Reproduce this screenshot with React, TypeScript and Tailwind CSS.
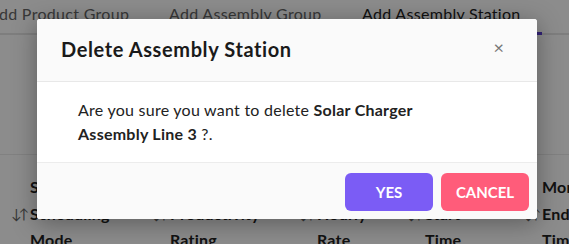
import React from "react";

const font = { fontFamily: "Lato, 'Noto Sans', sans-serif" };

function SortIcon() {
  return (
    <span className="w-[19px] shrink-0 text-[#666] text-[14px] leading-none tracking-[-3px]">
      ↓↑
    </span>
  );
}

const columns = [
  { left: "w-[140px]", lines: ["Station", "Scheduling", "Mode"] },
  { left: "w-[147px]", lines: ["Station", "Productivity", "Rating"] },
  { left: "w-[108px]", lines: ["Station", "Hourly", "Rate"] },
  { left: "w-[117px]", lines: ["Monday", "Start", "Time"] },
  { left: "w-[120px]", lines: ["Monday", "End", "Time"] },
];

export default function App() {
  return (
    <div className="relative w-[569px] h-[244px] overflow-hidden bg-white" style={font}>
      {/* Background page */}
      <div className="flex flex-col">
        <div className="flex items-end h-[35px] border-b-2 border-[#e6e6e6] ml-[-12px]">
          <div className="w-[181px] text-[16px] tracking-[0.3px] text-[#666] pb-[7px]">Add Product Group</div>
          <div className="w-[193px] text-[16px] tracking-[0.3px] text-[#666] pb-[7px]">Add Assembly Group</div>
          <div className="relative w-[190px] text-[16px] tracking-[0.3px] text-[#222] pb-[7px]">
            Add Assembly Station
            <div className="absolute left-[-20px] w-[200px] bottom-[-2px] h-[3px] bg-[#5b3fd6]" />
          </div>
        </div>
        <div className="h-[120px] border-b border-[#ececec]" />
        <div className="flex pl-[11px] pt-[19px]">
          {columns.map((c, i) => (
            <div key={i} className={`${c.left} shrink-0 flex`}>
              <div className="flex flex-col pt-[33px]">
                <SortIcon />
              </div>
              <div className="flex flex-col text-[16px] font-bold text-[#222] leading-[26.5px] tracking-[0.2px]">
                {c.lines.map((l, j) => (
                  <span key={j}>{l}</span>
                ))}
              </div>
            </div>
          ))}
        </div>
      </div>

      {/* Overlay */}
      <div className="absolute inset-0 bg-black/45" />

      {/* Modal */}
      <div className="absolute left-[37px] top-[19px] w-[500px] rounded-[3px] bg-white shadow-[0_4px_24px_rgba(0,0,0,0.35)] overflow-hidden">
        <div className="flex items-center justify-between h-[63px] bg-[#fafafa] border-b border-[#e8e8e8] pl-[24px] pr-[33px]">
          <h2 className="text-[20px] font-bold tracking-[0.6px] text-[#1a1a1a] mt-[-3px]">Delete Assembly Station</h2>
          <button className="text-[#777] text-[18px] leading-none mt-[-6px]">×</button>
        </div>
        <div className="px-[41px] pt-[16px] pb-[16px] bg-white border-b border-[#ececec]">
          <p className="text-[16px] leading-[24px] tracking-[0.25px] text-[#222] max-w-[390px]">
            Are you sure you want to delete <span className="font-bold">Solar Charger Assembly Line 3</span> ?.
          </p>
        </div>
        <div className="flex justify-end gap-[8px] h-[56px] bg-[#fafafa] pt-[10px] pr-[8px]">
          <button className="w-[88px] h-[38px] rounded-[6px] bg-[#7b5cf5] text-white text-[15px] font-bold">YES</button>
          <button className="w-[88px] h-[38px] rounded-[6px] bg-[#ff5c7a] text-white text-[15px] font-bold">CANCEL</button>
        </div>
      </div>
    </div>
  );
}
